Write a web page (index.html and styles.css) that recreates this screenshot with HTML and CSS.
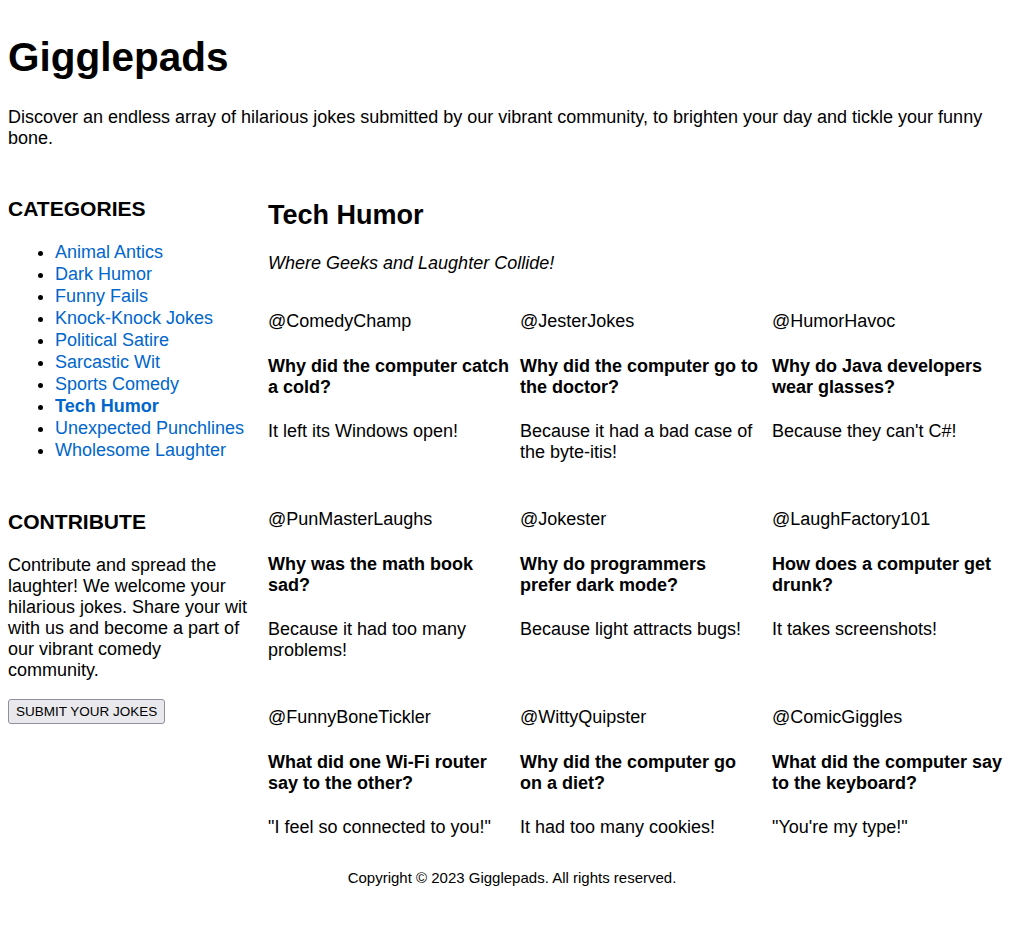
FILE: index.html
```html
<!DOCTYPE html>
<html lang="en">
<head>
<meta charset="utf-8">
<title>Gigglepads</title>
<link rel="stylesheet" href="styles.css">
</head>
<body>
<header class="site-header">
  <h1 class="site-title">Gigglepads</h1>
  <p class="site-intro">Discover an endless array of hilarious jokes submitted by our vibrant community, to brighten your day and tickle your funny bone.</p>
</header>
<div class="layout">
  <aside class="sidebar">
    <section class="side-section">
      <h3 class="side-title">CATEGORIES</h3>
      <ul class="cat-list">
        <li><a href="#">Animal Antics</a></li>
        <li><a href="#">Dark Humor</a></li>
        <li><a href="#">Funny Fails</a></li>
        <li><a href="#">Knock-Knock Jokes</a></li>
        <li><a href="#">Political Satire</a></li>
        <li><a href="#">Sarcastic Wit</a></li>
        <li><a href="#">Sports Comedy</a></li>
        <li><a href="#" class="active">Tech Humor</a></li>
        <li><a href="#">Unexpected Punchlines</a></li>
        <li><a href="#">Wholesome Laughter</a></li>
      </ul>
    </section>
    <section class="side-section contribute">
      <h3 class="side-title">CONTRIBUTE</h3>
      <p class="side-text">Contribute and spread the laughter! We welcome your hilarious jokes. Share your wit with us and become a part of our vibrant comedy community.</p>
      <button class="submit-btn" type="button">SUBMIT YOUR JOKES</button>
    </section>
  </aside>
  <main class="main">
    <h2 class="cat-title">Tech Humor</h2>
    <p class="cat-tagline">Where Geeks and Laughter Collide!</p>
    <div class="jokes">
      <article class="joke">
        <p class="joke-user">@ComedyChamp</p>
        <h4 class="joke-q">Why did the computer catch a cold?</h4>
        <p class="joke-a">It left its Windows open!</p>
      </article>
      <article class="joke">
        <p class="joke-user">@JesterJokes</p>
        <h4 class="joke-q">Why did the computer go to the doctor?</h4>
        <p class="joke-a">Because it had a bad case of the byte-itis!</p>
      </article>
      <article class="joke">
        <p class="joke-user">@HumorHavoc</p>
        <h4 class="joke-q">Why do Java developers wear glasses?</h4>
        <p class="joke-a">Because they can't C#!</p>
      </article>
      <article class="joke">
        <p class="joke-user">@PunMasterLaughs</p>
        <h4 class="joke-q">Why was the math book sad?</h4>
        <p class="joke-a">Because it had too many problems!</p>
      </article>
      <article class="joke">
        <p class="joke-user">@Jokester</p>
        <h4 class="joke-q">Why do programmers prefer dark mode?</h4>
        <p class="joke-a">Because light attracts bugs!</p>
      </article>
      <article class="joke">
        <p class="joke-user">@LaughFactory101</p>
        <h4 class="joke-q">How does a computer get drunk?</h4>
        <p class="joke-a">It takes screenshots!</p>
      </article>
      <article class="joke">
        <p class="joke-user">@FunnyBoneTickler</p>
        <h4 class="joke-q">What did one Wi-Fi router say to the other?</h4>
        <p class="joke-a">"I feel so connected to you!"</p>
      </article>
      <article class="joke">
        <p class="joke-user">@WittyQuipster</p>
        <h4 class="joke-q">Why did the computer go on a diet?</h4>
        <p class="joke-a">It had too many cookies!</p>
      </article>
      <article class="joke">
        <p class="joke-user">@ComicGiggles</p>
        <h4 class="joke-q">What did the computer say to the keyboard?</h4>
        <p class="joke-a">"You're my type!"</p>
      </article>
    </div>
  </main>
</div>
<footer class="site-footer">
  <small>Copyright &copy; 2023 Gigglepads. All rights reserved.</small>
</footer>
</body>
</html>
```

FILE: styles.css
```css
html, body {
  background: #ffffff;
}

body {
  margin: 0;
  padding: 0 8px;
  font-family: "Liberation Sans", Arial, sans-serif;
  font-size: 18px;
  line-height: 21px;
  color: #000000;
}

.site-header {
  padding-top: 34px;
}

.site-title {
  margin: 0 0 26px;
  font-size: 40.5px;
  line-height: normal;
  font-weight: bold;
}

.site-intro {
  margin: 0;
}

.layout {
  display: grid;
  grid-template-columns: 246px 1fr;
  column-gap: 14px;
  margin-top: 27px;
}

.side-section {
  margin-bottom: 49px;
}

.side-title {
  margin: 21px 0 20px;
  font-size: 1.17em;
  line-height: normal;
  font-weight: bold;
}

.contribute .side-title {
  margin-bottom: 21px;
}

.cat-list {
  margin: 0;
  padding-left: 47px;
}

.cat-list li {
  line-height: 22px;
}

.cat-list a {
  color: #0066cc;
  text-decoration: none;
}

.cat-list a.active {
  font-weight: bold;
}

.side-text {
  margin: 0 0 18px;
}

.submit-btn {
  font-family: "Liberation Sans", Arial, sans-serif;
  font-size: 13.5px;
  line-height: 17px;
  color: #000000;
  background: #e9e9ed;
  border: 1px solid #8f8f9d;
  border-radius: 3px;
  padding: 3px 7px;
  margin: 0;
}

.main {
  min-width: 0;
}

.cat-title {
  margin: 24px 0 22px;
  font-size: 1.5em;
  line-height: normal;
  font-weight: bold;
}

.cat-tagline {
  margin: 0 0 18px;
  font-style: italic;
}

.jokes {
  display: grid;
  grid-template-columns: repeat(3, 241.5px);
  column-gap: 10.5px;
}

.joke {
  padding-top: 1px;
  padding-bottom: 9px;
}

.joke-user {
  margin: 18px 0 24px;
}

.joke-q {
  margin: 0 0 23px;
  font-size: 1em;
  font-weight: bold;
}

.joke-a {
  margin: 0 0 18px;
}

.site-footer {
  margin-top: 4px;
  text-align: center;
  line-height: 17px;
}

.site-footer small {
  font-size: 15px;
}
```
